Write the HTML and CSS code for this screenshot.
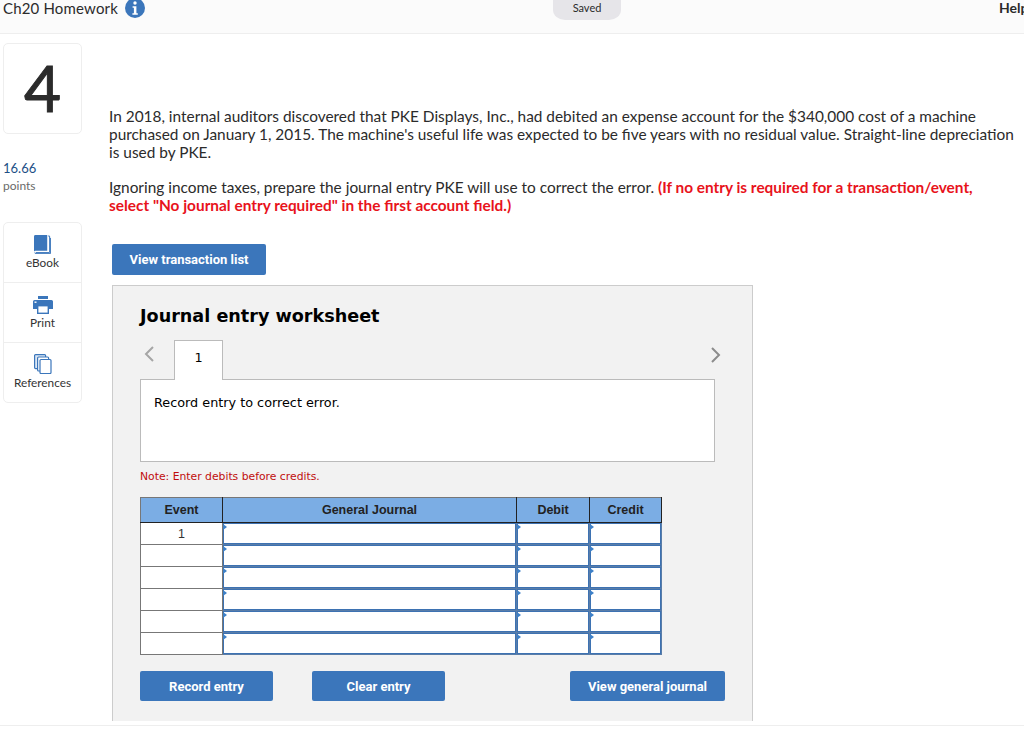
FILE: index.html
```html
<!DOCTYPE html>
<html lang="en">
<head>
<meta charset="utf-8">
<title>Ch20 Homework</title>
<link rel="stylesheet" href="styles.css">
</head>
<body>
<div class="page">
  <header class="topbar">
    <div class="title-wrap">
      <span class="title">Ch20 Homework</span>
      <svg class="info" viewBox="0 0 20 20" width="20" height="20"><circle cx="10" cy="10" r="10" fill="#3b76bb"/><circle cx="10" cy="5" r="1.7" fill="#fff"/><path d="M7.6 8.2h3.8v7h1.4v1.6H7.4v-1.6h1.5V9.8H7.6z" fill="#fff"/></svg>
    </div>
    <div class="saved">Saved</div>
    <div class="help">Help</div>
  </header>
  <div class="content">
    <aside class="side">
      <div class="qnum">4</div>
      <div class="score">16.66</div>
      <div class="points">points</div>
      <div class="tools">
        <div class="tool tool-book">
          <svg viewBox="0 0 18 20" width="17" height="19"><path d="M0 1.5A1.5 1.5 0 0 1 1.5 0H14v16.5H1.5A1.5 1.5 0 0 0 0 18z" fill="#3b76bb"/><path d="M15 1h1.5v17.5H1.8M.6 18.6c.2.8.7 1 1.4 1h15.500V3" fill="none" stroke="#3b76bb" stroke-width="1"/></svg>
          <span>eBook</span>
        </div>
        <div class="tool tool-print">
          <svg viewBox="0 0 20 18" width="20" height="18"><rect x="5" y="0" width="10" height="3" fill="#3b76bb"/><path d="M1.500 4h17A1.500 1.500 0 0 1 20 5.500V13h-4V9H4v4H0V5.500A1.500 1.500 0 0 1 1.500 4z" fill="#3b76bb"/><rect x="4.700" y="9.700" width="10.600" height="7.600" fill="#fff" stroke="#3b76bb" stroke-width="1.400"/><rect x="1.500" y="5.500" width="2" height="1.400" fill="#fff"/></svg>
          <span>Print</span>
        </div>
        <div class="tool tool-refs">
          <svg viewBox="0 0 18 20" width="18" height="20"><rect x=".6" y=".6" width="11" height="14" rx="1" fill="#dce8f5" stroke="#3b76bb" stroke-width="1.200"/><rect x="3.600" y="3" width="11" height="14" rx="1" fill="#fff" stroke="#3b76bb" stroke-width="1.200"/><rect x="6" y="5.500" width="11" height="14" rx="1" fill="#fff" stroke="#3b76bb" stroke-width="1.200"/></svg>
          <span>References</span>
        </div>
      </div>
    </aside>
    <main class="main">
      <p class="para">In 2018, internal auditors discovered that PKE Displays, Inc., had debited an expense account for the $340,000 cost of a machine purchased on January 1, 2015. The machine's useful life was expected to be five years with no residual value. Straight-line depreciation is used by PKE.</p>
      <p class="para para-two">Ignoring income taxes, prepare the journal entry PKE will use to correct the error. <strong class="alert">(If no entry is required for a transaction/event, select "No journal entry required" in the first account field.)</strong></p>
      <button class="btn btn-list">View transaction list</button>
      <section class="sheet">
        <h2 class="sheet-title">Journal entry worksheet</h2>
        <div class="tabs">
          <svg class="chev" viewBox="0 0 10 16" width="10" height="16"><path d="M9 1 2 8l7 7" fill="none" stroke="#a6a6a6" stroke-width="2"/></svg>
          <div class="tab">1</div>
          <svg class="chev chev-right" viewBox="0 0 10 16" width="10" height="16"><path d="m1 1 7 7-7 7" fill="none" stroke="#8c8c8c" stroke-width="2"/></svg>
        </div>
        <div class="panel">Record entry to correct error.</div>
        <p class="note">Note: Enter debits before credits.</p>
        <table class="journal">
          <thead>
            <tr><th class="c-event">Event</th><th class="c-acct">General Journal</th><th class="c-debit">Debit</th><th class="c-credit">Credit</th></tr>
          </thead>
          <tbody>
            <tr><td class="ev">1</td><td class="cell"><div class="in"></div></td><td class="cell"><div class="in"></div></td><td class="cell"><div class="in"></div></td></tr>
            <tr><td class="ev"></td><td class="cell"><div class="in"></div></td><td class="cell"><div class="in"></div></td><td class="cell"><div class="in"></div></td></tr>
            <tr><td class="ev"></td><td class="cell"><div class="in"></div></td><td class="cell"><div class="in"></div></td><td class="cell"><div class="in"></div></td></tr>
            <tr><td class="ev"></td><td class="cell"><div class="in"></div></td><td class="cell"><div class="in"></div></td><td class="cell"><div class="in"></div></td></tr>
            <tr><td class="ev"></td><td class="cell"><div class="in"></div></td><td class="cell"><div class="in"></div></td><td class="cell"><div class="in"></div></td></tr>
            <tr><td class="ev"></td><td class="cell"><div class="in"></div></td><td class="cell"><div class="in"></div></td><td class="cell"><div class="in"></div></td></tr>
          </tbody>
        </table>
        <div class="actions">
          <button class="btn btn-act">Record entry</button>
          <button class="btn btn-act">Clear entry</button>
          <button class="btn btn-view">View general journal</button>
        </div>
      </section>
    </main>
  </div>
  <div class="footline"></div>
</div>
</body>
</html>
```

FILE: styles.css
```css
* { box-sizing: border-box; }
html, body { margin: 0; padding: 0; background: #fff; }
.page { width: 1024px; height: 732px; overflow: hidden; font-family: "Lato", "Liberation Sans", sans-serif; color: #2b2b2b; }

.topbar { display: flex; height: 34px; background: #fbfbfb; border-bottom: 1px solid #eeeeee; padding-left: 3px; }
.title-wrap { width: 550px; display: flex; align-items: flex-start; }
.title { font-size: 15px; line-height: 17px; letter-spacing: .17px; }
.info { margin: -2px 0 0 7px; }
.saved { width: 68px; height: 20px; background: #e6e5e9; border-radius: 0 0 12px 12px / 0 0 10px 10px; font-size: 11px; line-height: 16px; text-align: center; }
.help { margin-left: auto; margin-right: -6px; width: 31px; font-weight: 700; font-size: 14px; line-height: 16px; }

.content { display: flex; height: 687px; }
.side { width: 79px; margin-left: 3px; padding-top: 9px; flex: none; }
.qnum { height: 91px; border: 1px solid #eeeeee; border-radius: 5px; font-size: 64px; line-height: 88px; text-align: center; color: #2b2b2b; -webkit-text-stroke: 1px #2b2b2b; }
.score { margin-top: 26px; font-size: 13px; line-height: 17px; color: #1d4f86; }
.points { font-size: 12px; line-height: 17px; color: #6a6a6a; }
.tools { margin-top: 28px; border: 1px solid #eeeeee; border-radius: 5px; }
.tool { height: 60px; display: flex; flex-direction: column; align-items: center; font-size: 11.8px; border-bottom: 1px solid #eeeeee; }
.tool-book { padding-top: 12px; }
.tool-print { padding-top: 13px; }
.tool-refs { padding-top: 11px; height: 59px; border-bottom: 0; }
.tool span { margin-top: 2px; line-height: 14px; color: #333; }

.main { margin-left: 27px; flex: none; width: 912px; padding-top: 73px; }
.para { margin: 0; width: 908px; font-size: 15.4px; line-height: 18px; color: #2b2b2b; }
.para-two { margin-top: 17px; width: 885px; }
.alert { color: #e8131b; font-weight: 700; }

.btn { display: block; border: 0; border-radius: 2px; background: #3b76bb; color: #fff; font-family: "Roboto", "Liberation Sans", sans-serif; font-weight: 700; font-size: 13px; padding: 0; text-align: center; }
.btn-list { margin: 30px 0 0 3px; width: 154px; height: 31px; }

.sheet { margin: 10px 0 0 3px; width: 641px; height: 436px; background: #f2f2f2; border: 1px solid #cccccc; border-bottom: 0; padding: 0 27px; font-family: "DejaVu Sans", Verdana, sans-serif; color: #000; }
.sheet-title { margin: 19px 0 0; font-size: 17.6px; line-height: 22px; font-weight: 700; }
.tabs { display: flex; align-items: center; height: 40px; margin-top: 13px; position: relative; z-index: 1; }
.chev { margin-left: 4px; margin-bottom: 13px; }
.chev-right { margin-left: auto; margin-right: 4px; margin-bottom: 10px; }
.tab { margin-left: 20px; width: 49px; height: 40px; background: #fff; border: 1px solid #bbbbbb; border-bottom: 0; font-size: 12.8px; line-height: 34px; text-align: center; }
.panel { margin-top: -1px; width: 575px; height: 83px; background: #fff; border: 1px solid #bbbbbb; padding: 15px 13px; font-size: 12.8px; line-height: 16px; }
.note { margin: 8px 0 0; font-size: 10.8px; line-height: 14px; color: #c00d0d; }

.journal { margin-top: 13px; width: 521px; table-layout: fixed; border-collapse: collapse; font-family: "Liberation Sans", Arial, sans-serif; font-size: 12.5px; }
.journal th { height: 25px; padding: 0; background: #7bade4; border: 1px solid #222; border-top-color: #777; color: #222; font-weight: 700; }
.journal th:first-child { border-left-color: #777; }
.c-event { width: 82px; }
.c-acct { width: 294px; }
.c-debit { width: 73px; }
.c-credit { width: 72px; }
.journal td { height: 22px; padding: 0; }
.ev { border: 1px solid #777; background: #fff; text-align: center; color: #333; font-weight: 400; vertical-align: middle; }
.cell { border: 1px solid #5a7da8; background: #fff; }
.in { position: relative; height: 21px; background: #fff; border: 1px solid #3d72b2; }
.in::before { content: ""; position: absolute; left: -1px; top: 0; border-left: 4px solid #3d80c8; border-top: 3px solid transparent; border-bottom: 3px solid transparent; }

.actions { display: flex; margin-top: 16px; }
.btn-act { width: 133px; height: 30px; margin-right: 39px; }
.btn-view { width: 155px; height: 30px; margin-left: 86px; }

.footline { height: 1px; margin-top: 4px; background: #eeeeee; }
```
